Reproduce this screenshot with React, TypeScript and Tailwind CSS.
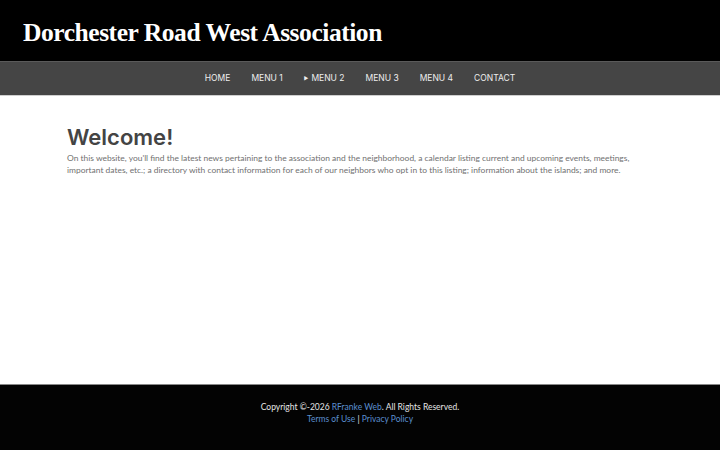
export default function App() {
  return (
    <div className="min-h-[450px] flex flex-col bg-white">
      <header className="bg-black h-[61px] flex items-center px-[23px] pt-[5px]">
        <h1 className="text-white text-[25.5px] font-bold tracking-[-0.45px] leading-none" style={{ fontFamily: '"Liberation Serif", serif' }}>
          Dorchester Road West Association
        </h1>
      </header>
      <nav className="bg-[#454545] h-[35px] border-t border-[#5a5a5a] border-b border-b-[#cfcfcf] flex items-center justify-center gap-[21px] text-[8.5px] text-[#eeeeee] uppercase" style={{ fontFamily: 'Inter, "Open Sans", sans-serif' }}>
        <span>Home</span>
        <span>Menu 1</span>
        <span className="flex items-center gap-[3px]"><span className="text-[5px]">▶</span>Menu 2</span>
        <span>Menu 3</span>
        <span>Menu 4</span>
        <span>Contact</span>
      </nav>
      <main className="flex-1 h-[288px] px-[67px] pt-[28px]">
        <h2 className="text-[22px] font-semibold text-[#444444] leading-[26px]" style={{ fontFamily: 'Inter, "Open Sans", sans-serif' }}>Welcome!</h2>
        <p className="text-[8.45px] leading-[12px] text-[#707070] mt-[2px] max-w-[590px]" style={{ fontFamily: 'Lato, "Open Sans", sans-serif' }}>
          On this website, you'll find the latest news pertaining to the association and the neighborhood, a calendar listing current and upcoming events, meetings, important dates, etc.; a directory with contact information for each of our neighbors who opt in to this listing; information about the islands; and more.
        </p>
      </main>
      <footer className="bg-[#030303] border-t border-[#888888] h-[66px] flex flex-col items-center pt-[16px] text-[8.5px] leading-[12px] text-[#e5e5e5]" style={{ fontFamily: 'Lato, "Open Sans", sans-serif' }}>
        <p>Copyright ©-2026 <span className="text-[#5b8fd0]">RFranke Web</span>. All Rights Reserved.</p>
        <p><span className="text-[#5b8fd0]">Terms of Use</span> | <span className="text-[#5b8fd0]">Privacy Policy</span></p>
      </footer>
    </div>
  );
}
